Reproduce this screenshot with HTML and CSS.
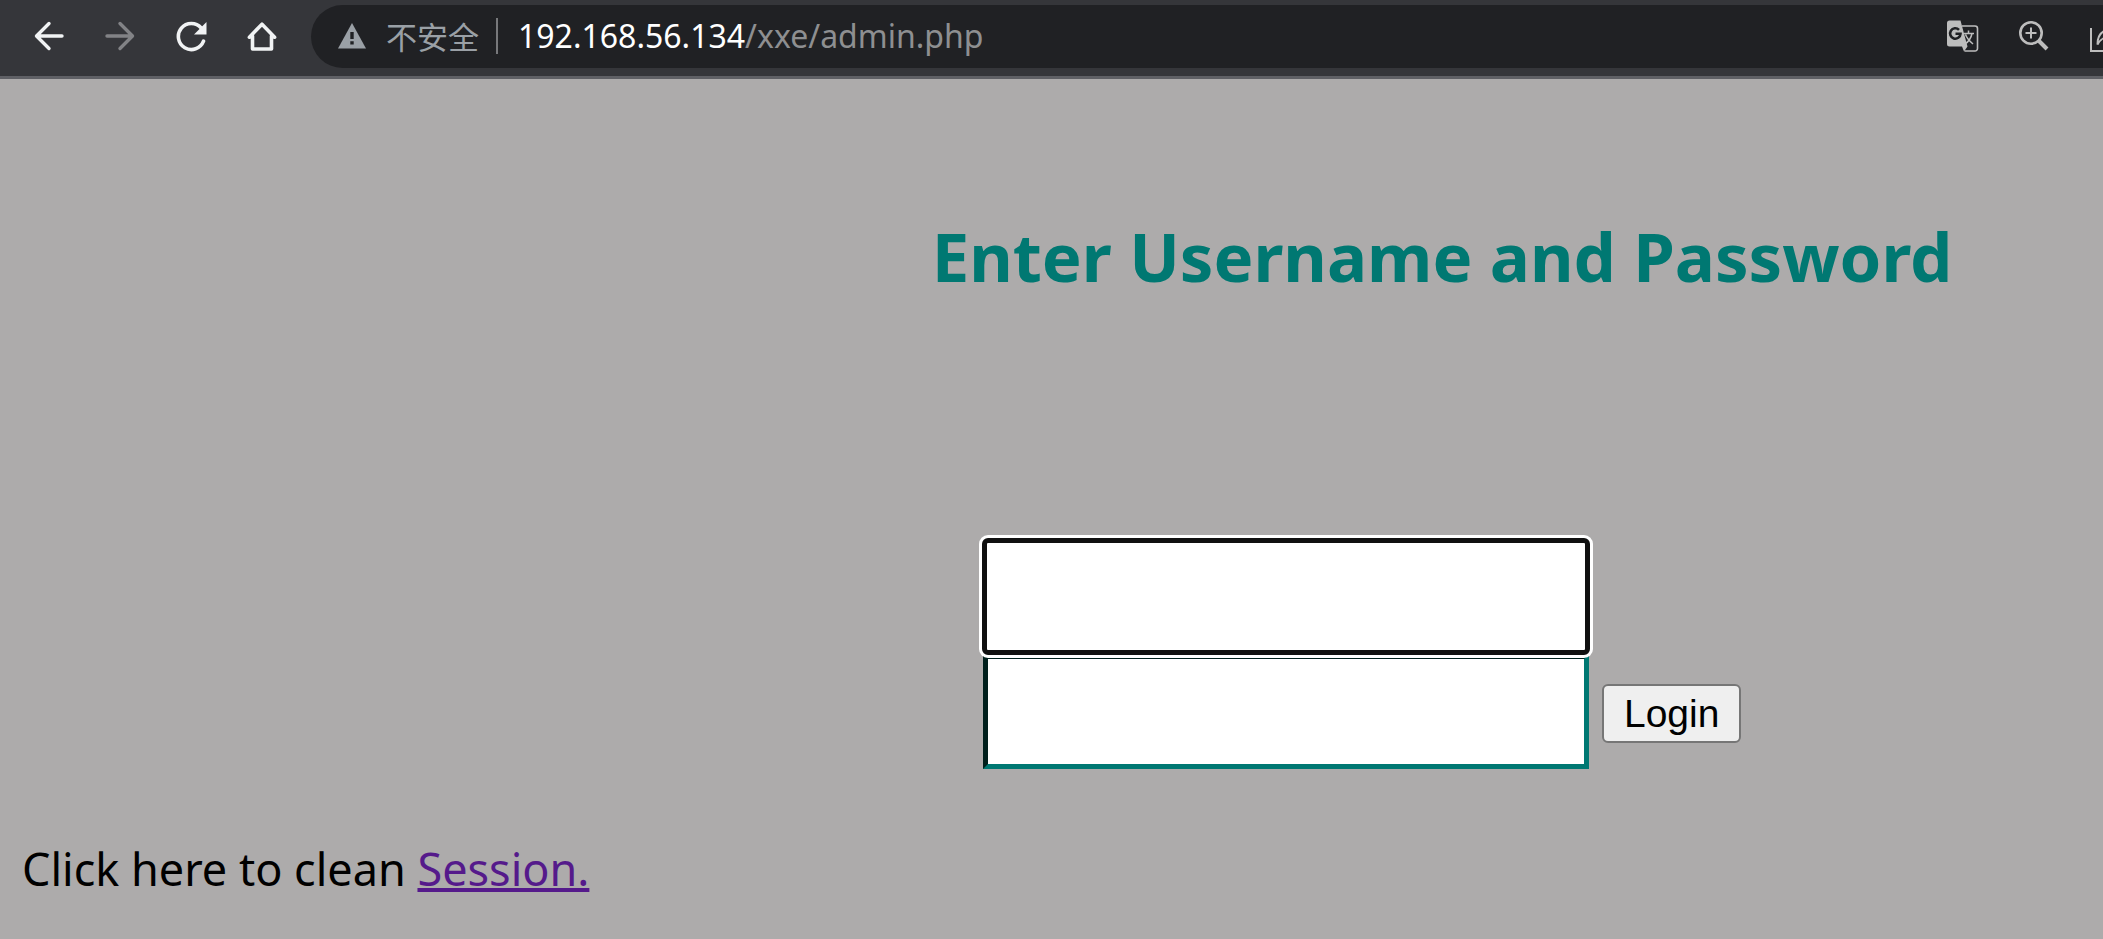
FILE: index.html
```html
<!DOCTYPE html>
<html lang="en">
<head>
<meta charset="utf-8">
<title>admin.php</title>
<link rel="stylesheet" href="styles.css">
</head>
<body>
<header class="toolbar">
  <nav class="nav" aria-label="Browser">
    <button class="icon-button" type="button" aria-label="Back">
      <svg width="32" height="32" viewBox="0 0 32 32" fill="none" stroke="#f1f3f4" stroke-width="3.4" stroke-linecap="round" stroke-linejoin="round"><path d="M29 16H4M16 3.500 3.500 16 16 28.500" /></svg>
    </button>
    <button class="icon-button" type="button" aria-label="Forward">
      <svg width="32" height="32" viewBox="0 0 32 32" fill="none" stroke="#828386" stroke-width="3.400" stroke-linecap="round" stroke-linejoin="round"><path d="M3 16h25M16 3.500 28.500 16 16 28.500" /></svg>
    </button>
    <button class="icon-button" type="button" aria-label="Reload">
      <svg width="32" height="32" viewBox="0 0 32 32"><path d="M28.500 21.200A13 13 0 1 1 26.200 8" fill="none" stroke="#f1f3f4" stroke-width="3.600" stroke-linecap="round"/><path d="M31.500 2v12.500H19z" fill="#f1f3f4"/></svg>
    </button>
    <button class="icon-button" type="button" aria-label="Home">
      <svg width="32" height="32" viewBox="0 0 32 32" fill="none" stroke="#f1f3f4" stroke-width="3.600" stroke-linejoin="round" stroke-linecap="round"><path d="M3.400 17.200 16 4.200l12.600 13M6.500 16v13h19V16"/></svg>
    </button>
  </nav>
  <div class="omnibox">
    <svg class="warning" width="28" height="26" viewBox="0 0 28 26"><path d="M14 0 28 25.500H0z" fill="#9aa0a6"/><path d="M12.300 9h3.400v7h-3.400zM12.300 18.300h3.400v3.200h-3.400z" fill="#202124"/></svg>
    <span class="security">不安全</span>
    <span class="address"><span class="host">192.168.56.134</span>/xxe/admin.php</span>
    <div class="actions">
      <button class="icon-button" type="button" aria-label="Translate">
        <svg width="32" height="32" viewBox="0 0 32 32"><path d="M15 6h13a2.500 2.500 0 0 1 2.500 2.500v20A2.500 2.500 0 0 1 28 31H17.500" fill="none" stroke="#bdbdbd" stroke-width="1.600"/><path d="M2.500.500h11L20.500 26.500H2.500A2.500 2.500 0 0 1 0 24V3A2.500 2.500 0 0 1 2.500.500zM15 26.500h5.500L17 31.500z" fill="#bdbdbd"/><path d="M8.500 13.800h5a5.200 5.200 0 1 1-1.500-4" fill="none" stroke="#202124" stroke-width="2.600"/><path d="M17 13.500h10M21.500 10.500v3M25 13.500c-1 5-4 8.500-7 10.500M18.500 14.500c1.500 4 4.500 7 7.500 9.500" fill="none" stroke="#bdbdbd" stroke-width="1.500"/></svg>
      </button>
      <button class="icon-button" type="button" aria-label="Zoom">
        <svg width="32" height="32" viewBox="0 0 32 32" fill="none" stroke="#bdbdbd"><circle cx="13" cy="13" r="10.700" stroke-width="2.600"/><path d="M7.500 13h11M13 7.500v11" stroke-width="2"/><path d="m20.500 20.500 8.500 8.500" stroke-width="4"/></svg>
      </button>
      <button class="icon-button" type="button" aria-label="Share">
        <svg width="32" height="32" viewBox="0 0 32 32" fill="none" stroke="#bdbdbd" stroke-width="2"><path d="M2 8v23h26v-7M8.500 24.500c0-9 4-14 12-15V3l9 10-9 9v-5c-6 0-9 2-12 7.500z"/></svg>
      </button>
    </div>
  </div>
</header>
<main class="page">
  <h1 class="title">Enter Username and Password</h1>
  <form class="login">
    <div class="fields">
      <input class="field field-focused" type="text" aria-label="Username">
      <input class="field" type="password" aria-label="Password">
    </div>
    <button class="submit" type="button">Login</button>
  </form>
  <p class="note">Click here to clean <a class="link" href="#">Session.</a></p>
</main>
</body>
</html>
```
FILE: styles.css
```css
* {
  box-sizing: border-box;
}

body {
  margin: 0;
  min-height: 100vh;
  overflow-x: hidden;
  background: #adabab;
  color: #000;
  font-family: "Noto Sans", "Noto Sans CJK SC", sans-serif;
}

.toolbar {
  display: flex;
  padding: 5px 0 8px 33px;
  background: #35363a;
  border-bottom: 3px solid #5f6065;
}

.nav {
  display: flex;
  align-items: center;
  gap: 39px;
  padding-bottom: 2px;
  margin-right: 33px;
}

.icon-button {
  display: flex;
  flex: none;
  padding: 0;
  border: 0;
  background: none;
}

.omnibox {
  display: flex;
  flex: 1;
  align-items: center;
  min-width: 0;
  height: 63px;
  padding: 0 0 2px 27px;
  overflow: hidden;
  border-radius: 32px 0 0 32px;
  background: #202124;
  color: #8e8f91;
  font-size: 32px;
  line-height: 36px;
  white-space: nowrap;
}

.warning {
  flex: none;
}

.security {
  margin-left: 20px;
  padding-right: 17px;
  border-right: 2px solid #77787b;
  color: #9aa0a6;
  font-family: "Noto Sans CJK SC", sans-serif;
  font-size: 31px;
  font-weight: 400;
}

.address {
  margin-left: 20px;
}

.host {
  color: #fff;
}

.actions {
  display: flex;
  gap: 39px;
  margin-right: -18px;
  margin-left: auto;
}

.title {
  margin: 0;
  padding: 127px 0 0 44.3%;
  color: #007872;
  font-size: 67px;
  line-height: 100px;
  white-space: nowrap;
}

.login {
  display: flex;
  align-items: flex-end;
  gap: 13px;
  margin-top: 233px;
  padding-left: 46.75%;
}

.fields {
  display: flex;
  flex-direction: column;
  width: 54.1%;
}

.field {
  width: 100%;
  height: 115px;
  padding: 8px 12px;
  border: 5px solid #007872;
  border-color: #00201c #007872 #007872 #00201c;
  border-radius: 0;
  background: #fff;
  font: 40px "Liberation Sans", sans-serif;
  outline: none;
}

.field-focused {
  z-index: 1;
  border-color: #fff;
  border-radius: 5px;
  outline: 5px solid #101010;
  outline-offset: -4px;
  box-shadow: 0 0 0 4px #fff;
}

.submit {
  margin-bottom: 26px;
  padding: 5px 20px;
  border: 2px solid #767676;
  border-radius: 6px;
  background: #efefef;
  color: #000;
  font: 39px/45px "Liberation Sans", sans-serif;
}

.note {
  margin: 68px 0 0;
  padding-left: 22px;
  font-size: 45px;
  line-height: 64px;
}

.link {
  color: #551a8b;
  text-decoration-thickness: 4px;
}
```
